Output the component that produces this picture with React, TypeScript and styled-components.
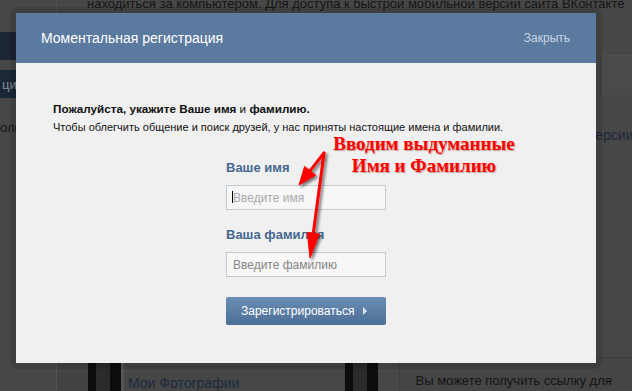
import React from "react";
import styled, { createGlobalStyle } from "styled-components";

const GlobalStyle = createGlobalStyle`
  html, body {
    margin: 0;
    padding: 0;
    background: #474747;
    overflow: hidden;
  }
  * {
    box-sizing: border-box;
  }
`;

const Page = styled.div`
  position: relative;
  width: 632px;
  height: 391px;
  overflow: hidden;
  display: flex;
  background: #474747;
  font-family: "Liberation Sans", Arial, sans-serif;
`;

const LeftCol = styled.div`
  width: 57px;
  flex-shrink: 0;
  border-right: 1px solid #515151;
  padding-top: 32px;
  display: flex;
  flex-direction: column;
`;

const NavItem = styled.div<{ $tone: string; $h: number }>`
  height: ${(p) => p.$h}px;
  background: ${(p) => p.$tone};
  color: #8a8f96;
  font-size: 13px;
  display: flex;
  align-items: center;
  padding-left: 2px;
  margin-bottom: 10px;
`;

const SideText = styled.div`
  color: #161616;
  font-size: 13px;
  margin-top: 12px;
  white-space: nowrap;
`;

const Main = styled.div`
  flex: 1;
  display: flex;
  flex-direction: column;
  min-width: 0;
`;

const TopText = styled.div`
  height: 14px;
  padding-left: 30px;
  overflow: hidden;
  font-size: 13px;
  color: #161616;
  white-space: nowrap;
  line-height: 15px;
  & > span {
    display: block;
    margin-top: -4px;
  }
`;

const Middle = styled.div`
  flex: 1;
  display: flex;
  justify-content: flex-end;
`;

const RightRail = styled.div`
  width: 36px;
  padding-top: 41px;
`;

const RailBox = styled.div`
  height: 40px;
  border-top: 1px solid #505050;
  border-left: 1px solid #505050;
  margin-left: 7px;
  background: #4a4a4a;
`;

const RailText = styled.div`
  margin-top: 32px;
  margin-left: -8px;
  font-size: 14px;
  color: #1e2a3a;
  white-space: nowrap;
`;

const BottomStrip = styled.div`
  height: 36px;
  display: flex;
`;

const Gap = styled.div<{ $w: number; $tone?: string }>`
  width: ${(p) => p.$w}px;
  flex-shrink: 0;
  background: ${(p) => p.$tone || "transparent"};
`;

const PhoneEdge = styled.div`
  width: 33px;
  flex-shrink: 0;
  display: flex;
  background: #2b2b2b;
  & > i {
    display: block;
    width: 8px;
    background: #0d0d0d;
  }
  & > i:last-child {
    margin-left: auto;
    width: 11px;
  }
`;

const PhoneScreen = styled.div`
  flex: 1;
  border-left: 3px solid #555;
  padding-left: 4px;
  background: #464646;
  display: flex;
  flex-direction: column;
`;

const ScreenLink = styled.div<{ $line?: boolean }>`
  font-size: 14px;
  color: #1d2a3b;
  white-space: nowrap;
  line-height: 17px;
  border-bottom: ${(p) => (p.$line ? "1px solid #3a3a3a" : "none")};
  padding-bottom: ${(p) => (p.$line ? "6px" : "0")};
  margin-top: ${(p) => (p.$line ? "-12px" : "8px")};
`;

const InfoBox = styled.div`
  flex: 1;
  margin-top: 2px;
  border-top: 1px solid #3d3d3d;
  border-left: 1px solid #3d3d3d;
  border-top-left-radius: 4px;
  background: #454545;
  padding: 15px 0 0 16px;
  font-size: 13px;
  color: #141414;
  white-space: nowrap;
`;

const Frame = styled.div`
  position: absolute;
  left: 10px;
  top: 7px;
  padding: 6px;
  border-radius: 8px;
  background: rgba(0, 0, 0, 0.11);
`;

const Modal = styled.div`
  width: 580px;
  height: 350px;
  background: #f0f0f0;
  display: flex;
  flex-direction: column;
`;

const Header = styled.div`
  height: 50px;
  background: #5b7aa0;
  display: flex;
  align-items: center;
  justify-content: space-between;
  padding: 0 26px 0 25px;
`;

const HeaderTitle = styled.div`
  color: #ffffff;
  font-size: 14px;
`;

const CloseLink = styled.div`
  color: #c6d3e2;
  font-size: 12px;
`;

const Body = styled.div`
  padding: 36px 0 0 37px;
  color: #111;
  font-size: 11px;
  line-height: 19px;
`;

const Lead = styled.div`
  font-weight: bold;
  font-size: 11.7px;
  & > span {
    font-weight: normal;
  }
`;

const Form = styled.div`
  width: 160px;
  margin: 23px 0 0 173px;
  display: flex;
  flex-direction: column;
`;

const Label = styled.div<{ $top: number }>`
  color: #45688e;
  font-weight: bold;
  font-size: 13px;
  line-height: 16px;
  margin-top: ${(p) => p.$top}px;
  margin-bottom: 9px;
`;

const FieldWrap = styled.div`
  position: relative;
  height: 25px;
`;

const Field = styled.input<{ $ph: string }>`
  width: 160px;
  height: 25px;
  border: 1px solid #c0cad5;
  background: #f7f7f7;
  padding: 0 0 0 6px;
  font-family: "Liberation Sans", Arial, sans-serif;
  font-size: 12px;
  outline: none;
  &::placeholder {
    color: ${(p) => p.$ph};
  }
`;

const Caret = styled.span`
  position: absolute;
  left: 6px;
  top: 6px;
  width: 1px;
  height: 12px;
  background: #000;
`;

const Button = styled.button`
  margin-top: 20px;
  width: 160px;
  height: 28px;
  border: none;
  border-radius: 2px;
  background: linear-gradient(#6a8db4, #4d6f97);
  color: #fff;
  font-family: "Liberation Sans", Arial, sans-serif;
  font-size: 12px;
  display: flex;
  align-items: center;
  padding: 0 0 0 15px;
  gap: 9px;
`;

const Tri = styled.span`
  width: 0;
  height: 0;
  border-top: 4px solid transparent;
  border-bottom: 4px solid transparent;
  border-left: 4px solid #dfe7f0;
`;

const Note = styled.div`
  position: absolute;
  left: 324px;
  top: 133px;
  width: 200px;
  text-align: center;
  font-family: "Liberation Serif", "Times New Roman", serif;
  font-weight: bold;
  font-size: 19px;
  line-height: 22px;
  color: #ff0000;
  text-shadow: 1px 1px 1px rgba(90, 0, 0, 0.35);
`;

const Arrows = styled.svg`
  position: absolute;
  left: 0;
  top: 0;
  pointer-events: none;
`;

function arrow(sx: number, sy: number, tx: number, ty: number, len: number, half: number) {
  const dx = tx - sx;
  const dy = ty - sy;
  const l = Math.hypot(dx, dy);
  const ux = dx / l;
  const uy = dy / l;
  const bx = tx - ux * len;
  const by = ty - uy * len;
  const px = -uy;
  const py = ux;
  return {
    shaft: { x1: sx, y1: sy, x2: bx + ux * 2, y2: by + uy * 2 },
    head: `${tx},${ty} ${bx + px * half},${by + py * half} ${bx - px * half},${by - py * half}`,
  };
}

export default function App() {
  const a1 = arrow(324, 153, 299, 185, 18, 7);
  const a2 = arrow(324, 153, 310, 258, 25, 6);

  return (
    <>
      <GlobalStyle />
      <Page>
        <LeftCol>
          <NavItem $tone="#1b2533" $h={28} />
          <NavItem $tone="#1c2838" $h={28}>ция</NavItem>
          <SideText>оль</SideText>
        </LeftCol>
        <Main>
          <TopText>
            <span>находиться за компьютером. Для доступа к быстрой мобильной версии сайта ВКонтакте</span>
          </TopText>
          <Middle>
            <RightRail>
              <RailBox />
              <RailText>версии</RailText>
            </RightRail>
          </Middle>
          <BottomStrip>
            <Gap $w={31} $tone="#434343" />
            <PhoneEdge>
              <i />
              <i />
            </PhoneEdge>
            <PhoneScreen>
              <ScreenLink $line>Мои Друзья</ScreenLink>
              <ScreenLink>Мои Фотографии</ScreenLink>
            </PhoneScreen>
            <PhoneEdge>
              <i />
              <i />
            </PhoneEdge>
            <Gap $w={21} />
            <InfoBox>Вы можете получить ссылку для</InfoBox>
          </BottomStrip>
        </Main>

        <Frame>
          <Modal>
            <Header>
              <HeaderTitle>Моментальная регистрация</HeaderTitle>
              <CloseLink>Закрыть</CloseLink>
            </Header>
            <Body>
              <Lead>
                Пожалуйста, укажите Ваше имя <span>и</span> фамилию.
              </Lead>
              <div>Чтобы облегчить общение и поиск друзей, у нас приняты настоящие имена и фамилии.</div>
              <Form>
                <Label $top={0}>Ваше имя</Label>
                <FieldWrap>
                  <Field $ph="#a9a9a9" placeholder="Введите имя" />
                  <Caret />
                </FieldWrap>
                <Label $top={17}>Ваша фамилия</Label>
                <FieldWrap>
                  <Field $ph="#858585" placeholder="Введите фамилию" />
                </FieldWrap>
                <Button>
                  Зарегистрироваться
                  <Tri />
                </Button>
              </Form>
            </Body>
          </Modal>
        </Frame>

        <Note>
          Вводим выдуманные
          <br />
          Имя и Фамилию
        </Note>
        <Arrows width="632" height="391" viewBox="0 0 632 391">
          <defs>
            <filter id="sh" x="-50%" y="-50%" width="200%" height="200%">
              <feDropShadow dx="2" dy="2" stdDeviation="1.6" floodColor="#000" floodOpacity="0.55" />
            </filter>
          </defs>
          <g filter="url(#sh)" fill="#ff0000" stroke="#ff0000">
            <line {...a1.shaft} strokeWidth="3" strokeLinecap="round" />
            <polygon points={a1.head} strokeWidth="1" strokeLinejoin="round" />
            <line {...a2.shaft} strokeWidth="3" strokeLinecap="round" />
            <polygon points={a2.head} strokeWidth="1" strokeLinejoin="round" />
          </g>
        </Arrows>
      </Page>
    </>
  );
}
